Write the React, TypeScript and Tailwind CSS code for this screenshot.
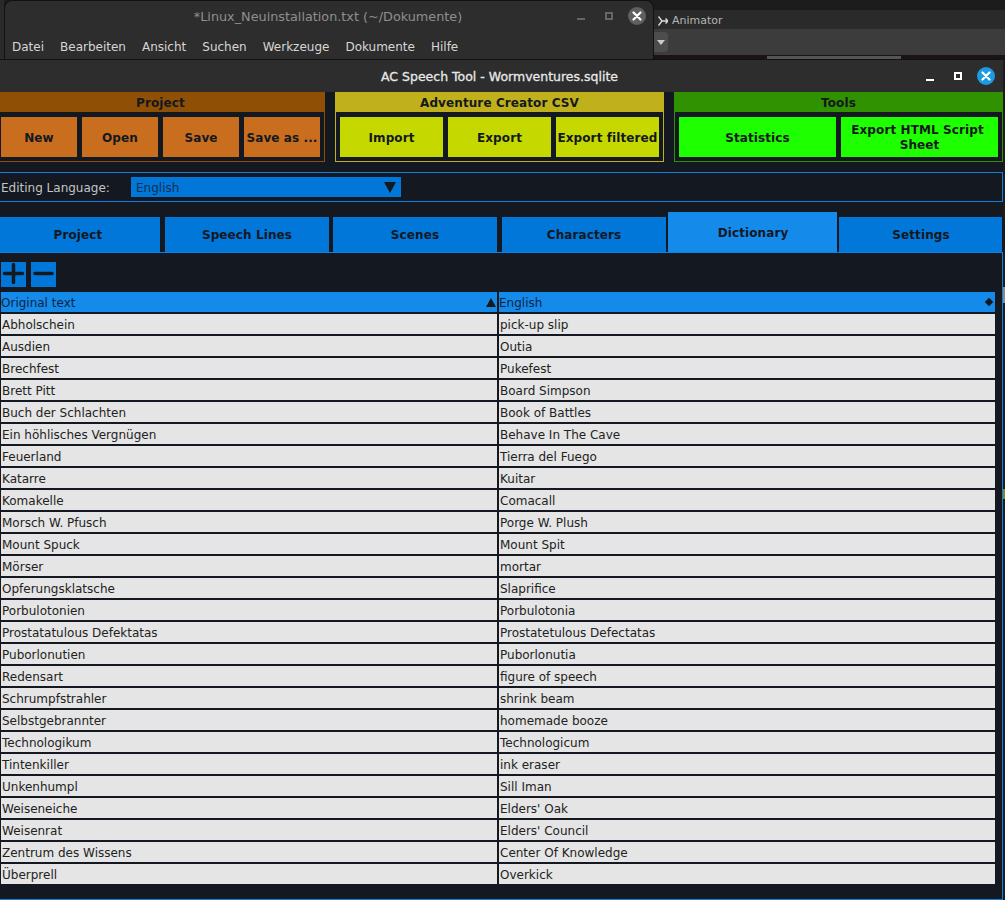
const rows: [string, string][] = [
  ['Abholschein', 'pick-up slip'],
  ['Ausdien', 'Outia'],
  ['Brechfest', 'Pukefest'],
  ['Brett Pitt', 'Board Simpson'],
  ['Buch der Schlachten', 'Book of Battles'],
  ['Ein höhlisches Vergnügen', 'Behave In The Cave'],
  ['Feuerland', 'Tierra del Fuego'],
  ['Katarre', 'Kuitar'],
  ['Komakelle', 'Comacall'],
  ['Morsch W. Pfusch', 'Porge W. Plush'],
  ['Mount Spuck', 'Mount Spit'],
  ['Mörser', 'mortar'],
  ['Opferungsklatsche', 'Slaprifice'],
  ['Porbulotonien', 'Porbulotonia'],
  ['Prostatatulous Defektatas', 'Prostatetulous Defectatas'],
  ['Puborlonutien', 'Puborlonutia'],
  ['Redensart', 'figure of speech'],
  ['Schrumpfstrahler', 'shrink beam'],
  ['Selbstgebrannter', 'homemade booze'],
  ['Technologikum', 'Technologicum'],
  ['Tintenkiller', 'ink eraser'],
  ['Unkenhumpl', 'Sill Iman'],
  ['Weiseneiche', "Elders' Oak"],
  ['Weisenrat', "Elders' Council"],
  ['Zentrum des Wissens', 'Center Of Knowledge'],
  ['Überprell', 'Overkick'],
];

const menus = ['Datei', 'Bearbeiten', 'Ansicht', 'Suchen', 'Werkzeuge', 'Dokumente', 'Hilfe'];

const tabs = [
  { label: 'Project', className: '-ml-1 w-[164px]' },
  { label: 'Speech Lines', className: 'ml-[5px] w-[164px]' },
  { label: 'Scenes', className: 'ml-[4px] w-[164px]' },
  { label: 'Characters', className: 'ml-[5px] w-[164px]' },
  { label: 'Dictionary', className: 'ml-[2px] w-[169px] pl-px', active: true },
  { label: 'Settings', className: 'ml-[2px] w-[163px] pl-px' },
];

function CloseIcon({ className }: { className: string }) {
  return (
    <div className={`flex h-[18px] w-[18px] items-center justify-center rounded-full ${className}`}>
      <svg width="10" height="10" viewBox="0 0 10 10">
        <path d="M1.5 1.5 8.5 8.5M8.5 1.5 1.5 8.5" stroke="#fff" strokeWidth="2.2" strokeLinecap="round" />
      </svg>
    </div>
  );
}

function ToolGroup({
  title,
  header,
  border,
  className,
  children,
}: {
  title: string;
  header: string;
  border: string;
  className: string;
  children: React.ReactNode;
}) {
  return (
    <div className={`flex h-[70px] w-[329px] flex-col border ${border} ${className}`}>
      <div className={`-mx-px -mt-px flex h-[20px] shrink-0 items-center justify-center pt-[2px] font-bold tracking-[0.1px] ${header}`}>
        {title}
      </div>
      <div className="flex flex-1 gap-[5px] px-1 pt-[5px]">{children}</div>
    </div>
  );
}

function ToolButton({ className, children }: { className: string; children: React.ReactNode }) {
  return (
    <div className={`flex h-10 flex-col items-center justify-center pt-[2px] text-center font-bold leading-[15px] tracking-[0.1px] ${className}`}>
      {children}
    </div>
  );
}

export default function App() {
  return (
    <div className="flex h-[900px] w-[1005px] flex-col overflow-hidden bg-[#1c1c1c] font-['DejaVu_Sans',sans-serif] text-[12px] text-[#14181f]">
      {/* windows behind the app */}
      <div className="flex h-[60px] shrink-0">
        <div className="w-1 bg-[#2a2a2a]" />
        <div className="flex w-[650px] flex-col rounded-t-lg border border-b-0 border-[#111] bg-[#2d2d2d]">
          <div className="relative flex h-[32px] items-center justify-center text-[12.8px] text-[#8f8f8f]">
            <span className="mr-[2px]">*Linux_Neuinstallation.txt (~/Dokumente)</span>
            <div className="absolute right-[7px] top-[6px] flex items-center gap-[15px]">
              <div className="mr-[5px] mt-[5px] h-[2px] w-2 bg-[#666]" />
              <div className="h-2 w-2 border-2 border-[#666]" />
              <CloseIcon className="bg-[#5f5f5f]" />
            </div>
          </div>
          <div className="flex gap-4 pl-[7px] pt-[5px] text-[#d6d6d6]">
            {menus.map((m) => (
              <span key={m}>{m}</span>
            ))}
          </div>
        </div>
        <div className="flex flex-1 flex-col">
          <div className="h-[10px] bg-[#1c1c1c]" />
          <div className="flex h-[19px] items-center gap-[4px] bg-[#2a2a2a] pl-[4px] pt-[3px] text-[11px] text-[#b5b5b5]">
            <svg width="10" height="10" viewBox="0 0 10 10" fill="none" stroke="#d8d8d8" strokeWidth="1.4">
              <path d="M0.5 0.5 4 5 0.5 9.500M4 5h6M7.500 2.500 10 5 7.500 7.500" />
            </svg>
            Animator
          </div>
          <div className="flex h-[26px] items-center bg-[#3c3c3c]">
            <div className="flex h-5 w-[14px] items-center justify-center rounded-r-sm bg-[#4d4d4d]">
              <div className="h-0 w-0 border-x-[4px] border-t-[5px] border-x-transparent border-t-[#ccc]" />
            </div>
          </div>
          <div className="flex flex-1 bg-[#1a1414] pl-[113px] pt-px">
            <div className="h-[3px] w-[134px] bg-[#555]" />
          </div>
        </div>
      </div>

      <div className="-mt-px flex min-h-0 flex-1">
        {/* app window */}
        <div className="flex w-[1003px] flex-col rounded-tr-lg border-t border-[#111] bg-[#141820]">
          <div className="relative flex h-[32px] shrink-0 items-center justify-center bg-[#2d2d2d]">
            <span className="pr-[4px] pt-[2px] text-[12.5px] text-[#e8e8e8] [-webkit-text-stroke:0.3px_#e8e8e8]">
              AC Speech Tool - Wormventures.sqlite
            </span>
            <div className="absolute right-[8px] top-[7px] flex items-center gap-[15px]">
              <div className="mr-[5px] mt-[7px] h-[2px] w-2 bg-white" />
              <div className="h-2 w-2 border-2 border-white" />
              <CloseIcon className="bg-[#1e9ae0]" />
            </div>
          </div>

          {/* toolbar groups */}
          <div className="-ml-1 flex shrink-0">
            <ToolGroup title="Project" header="bg-[#8f5005]" border="border-[#8f5005]" className="">
              {['New', 'Open', 'Save', 'Save as ...'].map((b) => (
                <ToolButton key={b} className="w-[76px] bg-[#c86e1e]">
                  {b}
                </ToolButton>
              ))}
            </ToolGroup>
            <ToolGroup title="Adventure Creator CSV" header="bg-[#c0b01b]" border="border-[#c0b01b]" className="ml-[10px]">
              {['Import', 'Export', 'Export filtered'].map((b) => (
                <ToolButton key={b} className="w-[103px] bg-[#c5d900]">
                  {b}
                </ToolButton>
              ))}
            </ToolGroup>
            <ToolGroup title="Tools" header="bg-[#309200]" border="border-[#309200]" className="ml-[10px]">
              <ToolButton className="w-[157px] bg-[#1eff00]">Statistics</ToolButton>
              <ToolButton className="w-[157px] bg-[#1eff00]">
                <span className="pr-[4px]">Export HTML Script</span>
                <span>Sheet</span>
              </ToolButton>
            </ToolGroup>
          </div>

          {/* editing language */}
          <div className="mt-[10px] flex h-[30px] shrink-0 items-center border-y border-r border-[#137fe0] pl-px text-[#c4c4c4]">
            <span className="w-[130px] pt-[2px]">Editing Language:</span>
            <div className="flex h-5 w-[270px] items-center justify-between bg-[#0077d9] px-[5px] text-[#14304f]">
              <span className="pt-[2px]">English</span>
              <div className="h-0 w-0 border-x-[6px] border-t-[11px] border-x-transparent border-t-[#14181f]" />
            </div>
          </div>

          {/* tabs */}
          <div className="mt-[10px] flex h-[40px] shrink-0 items-end">
            {tabs.map((t) => (
              <div
                key={t.label}
                className={`flex items-center justify-center font-bold tracking-[0.1px] ${t.className} ${
                  t.active ? 'h-10 bg-[#148aeb] pt-[2px]' : 'h-[35px] bg-[#0077d9]'
                }`}
              >
                {t.label}
              </div>
            ))}
          </div>

          {/* dictionary panel */}
          <div className="flex min-h-0 flex-1 flex-col border-y border-r border-[#137fe0] pl-px pr-[7px] pt-[9px]">
            <div className="flex gap-[5px]">
              <div className="flex h-[25px] w-[25px] items-center justify-center bg-[#0077d9]">
                <svg width="25" height="25" viewBox="0 0 25 25">
                  <path d="M12.500 2.500v18M3.500 11.500h18" stroke="#14181f" strokeWidth="3.5" strokeLinecap="round" />
                </svg>
              </div>
              <div className="flex h-[25px] w-[25px] items-center justify-center bg-[#0077d9]">
                <svg width="25" height="25" viewBox="0 0 25 25">
                  <path d="M4 11.500h17" stroke="#14181f" strokeWidth="3.5" strokeLinecap="round" />
                </svg>
              </div>
            </div>
            <div className="mt-[5px] flex h-[20px] gap-[2px] text-[#12253c]">
              <div className="relative flex w-[496px] items-center bg-[#148aeb] pt-[2px]">
                Original text
                <span className="absolute right-[1px] top-[6px] h-0 w-0 border-x-[5px] border-b-[9px] border-x-transparent border-b-[#14181f]" />
              </div>
              <div className="relative flex flex-1 items-center bg-[#148aeb] pt-[2px]">
                English
                <span className="absolute right-[3px] top-[7px] h-[6px] w-[6px] rotate-45 bg-[#14181f]" />
              </div>
            </div>
            <div className="mt-[2px] flex flex-col gap-[2px]">
              {rows.map(([original, english]) => (
                <div key={original} className="flex h-[20px] gap-[2px]">
                  <div className="flex w-[496px] items-center bg-[#e5e5e5] pl-[1px] pt-[2px] text-[#222]">{original}</div>
                  <div className="flex flex-1 items-center bg-[#e5e5e5] pl-[1px] pt-[2px] text-[#222]">{english}</div>
                </div>
              ))}
            </div>
          </div>
        </div>

        {/* sliver of the window behind on the right */}
        <div className="flex w-[2px] flex-col bg-[#1c1c1c]">
          <div className="mt-[228px] h-[16px] bg-[#8a8a8a]" />
          <div className="mt-[186px] h-[10px] bg-[#8a8420]" />
        </div>
      </div>
    </div>
  );
}
